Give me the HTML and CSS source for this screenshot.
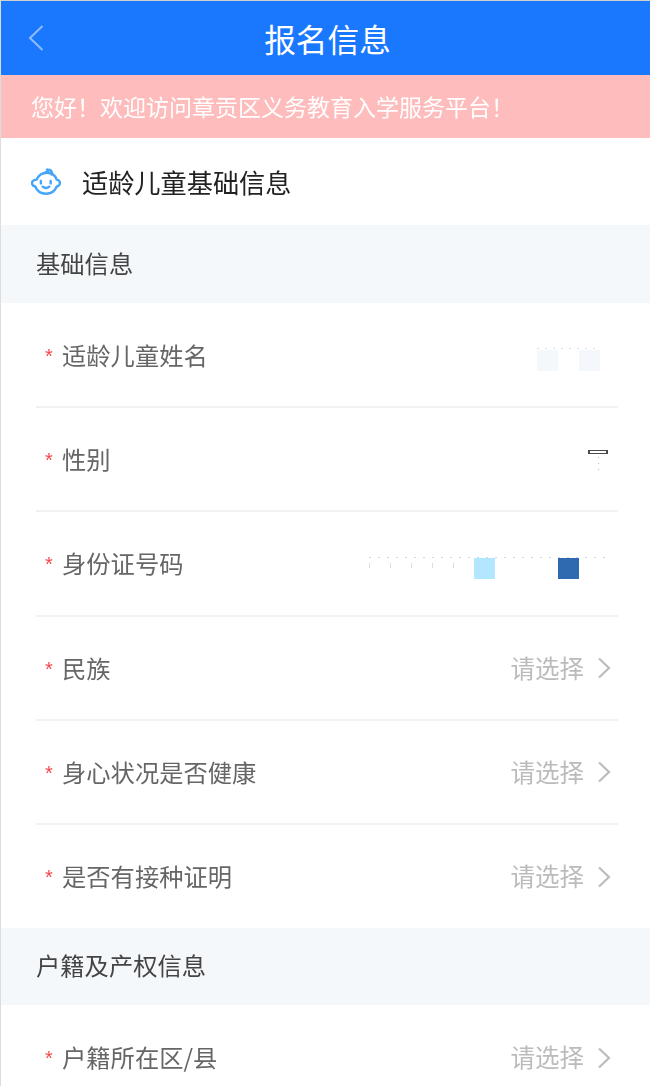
FILE: index.html
```html
<!DOCTYPE html>
<html lang="zh-CN">
<head>
<meta charset="utf-8">
<title>报名信息</title>
<link rel="stylesheet" href="styles.css">
</head>
<body>
<div class="page">
  <header class="nav">
    <svg class="back" viewBox="0 0 18 28" aria-hidden="true"><path d="M15.500 2 3 14l12.500 12" /></svg>
    <h1 class="nav-title">报名信息</h1>
  </header>
  <div class="notice">您好！欢迎访问章贡区义务教育入学服务平台！</div>
  <div class="heading">
    <svg class="baby" viewBox="0 0 32 30" aria-hidden="true">
      <path d="M6 12.500C8 7.500 12 5 17 5c5 0 9 3 10.500 7.500c2.500.5 3.500 2 3.500 3.500s-1.500 3.500-3.500 3.800C25.500 25 21 27.500 16 27.500S6.500 25 4.500 19.800C2.500 19.500 1 18 1 16s1.800-3.200 5-3.500Z"/>
      <path d="M15 5c2-.8 3.500-1.200 4-2.500c-.5-1-1.500-1-2-.5M20 2c2 1 3 3 2 5"/>
      <path d="M10.500 14v2.500M21 14v2.500M12.500 20c2 1.800 5 1.800 7 0"/>
    </svg>
    <span>适龄儿童基础信息</span>
  </div>

  <div class="section">基础信息</div>
  <div class="list list-first">
    <div class="row"><span class="label">适龄儿童姓名</span>
      <div class="value mask-name"><i class="sq sq-pale"></i><i class="sq sq-pale"></i></div></div>
    <div class="row"><span class="label">性别</span>
      <div class="value mask-sex"><i class="glyph"></i></div></div>
    <div class="row"><span class="label">身份证号码</span>
      <div class="value mask-id"><i class="sq sq-sky"></i><i class="sq sq-blue"></i></div></div>
    <div class="row"><span class="label">民族</span>
      <div class="value"><span class="placeholder">请选择</span><svg class="arrow" viewBox="0 0 14 22" aria-hidden="true"><path d="M2 1.500 12 11 2 20.500"/></svg></div></div>
    <div class="row"><span class="label">身心状况是否健康</span>
      <div class="value"><span class="placeholder">请选择</span><svg class="arrow" viewBox="0 0 14 22" aria-hidden="true"><path d="M2 1.500 12 11 2 20.500"/></svg></div></div>
    <div class="row"><span class="label">是否有接种证明</span>
      <div class="value"><span class="placeholder">请选择</span><svg class="arrow" viewBox="0 0 14 22" aria-hidden="true"><path d="M2 1.500 12 11 2 20.500"/></svg></div></div>
  </div>

  <div class="section section-short">户籍及产权信息</div>
  <div class="list">
    <div class="row"><span class="label">户籍所在区/县</span>
      <div class="value"><span class="placeholder">请选择</span><svg class="arrow" viewBox="0 0 14 22" aria-hidden="true"><path d="M2 1.500 12 11 2 20.500"/></svg></div></div>
  </div>
</div>
</body>
</html>
```
FILE: styles.css
```css
* { box-sizing: border-box; }
html, body { margin: 0; padding: 0; background: #fff; }
body {
  height: 1086px;
  overflow: hidden;
  font-family: "Noto Sans CJK SC", "Liberation Sans", sans-serif;
  font-weight: 400;
}
.page {
  height: 1086px;
  overflow: hidden;
  border-top: 1px solid #d0d0d0;
  border-left: 1px solid #dcdcdc;
  filter: blur(0.5px);
}
.nav {
  height: 74px;
  background: #1a78ff;
  display: flex;
  align-items: center;
  justify-content: center;
  position: relative;
  padding-left: 4px;
}
.nav-title {
  margin: 0;
  font-size: 31.700px;
  font-weight: 400;
  color: #fff;
  line-height: 72px;
}
.back {
  position: absolute;
  left: 26px;
  top: 23px;
  width: 18px;
  height: 28px;
  fill: none;
  stroke: #8fbcff;
  stroke-width: 2;
}
.notice {
  height: 63px;
  background: #ffbcbc;
  color: #fff;
  font-size: 23px;
  line-height: 63px;
  padding-left: 30px;
  white-space: nowrap;
}
.heading {
  height: 87px;
  display: flex;
  align-items: center;
  padding-left: 30px;
  gap: 21px;
  font-size: 26.200px;
  color: #222;
}
.baby {
  width: 30px;
  height: 28px;
  fill: none;
  stroke: #45a5f8;
  stroke-width: 2.600;
  stroke-linecap: round;
  stroke-linejoin: round;
}
.section {
  height: 78px;
  background: #f5f8fb;
  font-size: 24.300px;
  line-height: 75px;
  padding-left: 35px;
  color: #444;
}
.section-short { height: 77px; line-height: 73px; }
.list { padding: 0 32px 0 35px; }
.row {
  height: 104.200px;
  display: flex;
  align-items: center;
  justify-content: space-between;
  border-bottom: 2px solid #f2f2f2;
  padding-bottom: 1px;
}
.row:last-child { border-bottom: 0; }
.list-first { padding-top: 1px; }
.list-first .row:last-child { height: 103.200px; padding-bottom: 2px; }
.label {
  font-size: 24.300px;
  color: #666;
  position: relative;
  padding-left: 26px;
}
.label::before {
  content: "*";
  position: absolute;
  left: 9px;
  top: 1px;
  color: #f5484f;
  font-size: 20px;
  line-height: 36px;
  font-family: "Liberation Sans", sans-serif;
}
.value {
  display: flex;
  align-items: center;
  padding-right: 7px;
}
.placeholder {
  font-size: 24.500px;
  color: #bbb;
}
.arrow {
  width: 14px;
  height: 22px;
  margin-left: 13px;
  margin-top: 2px;
  fill: none;
  stroke: #bcbcbc;
  stroke-width: 2.200;
}
.sq { display: block; width: 21px; height: 21px; }
.sq-pale { background: #f4f7fb; }
.sq-sky { background: #b3e6ff; }
.sq-blue { background: #2f69b0; }
.mask-name {
  gap: 21px;
  padding-top: 2px;
  padding-right: 18px;
  margin-top: 9px;
  background: repeating-linear-gradient(90deg, #d9e0e8 0 2px, transparent 2px 8px) 0 0 / 63px 1px no-repeat;
  background-position: left top;
}
.mask-sex { padding-right: 10px; }
.glyph {
  display: block;
  width: 20px;
  height: 20px;
  margin-top: 2px;
  background:
    linear-gradient(#fff, #fff) 2px 1px / 16px 2px no-repeat,
    linear-gradient(#4a4a4a, #4a4a4a) 0 0 / 20px 4px no-repeat,
    repeating-linear-gradient(#bbb 0 1px, transparent 1px 6px) center 7px / 1px 13px no-repeat;
}
.mask-id {
  width: 240px;
  margin-top: 11px;
  padding-right: 0;
  padding-left: 105px;
  gap: 63px;
  height: 22px;
  background:
    repeating-linear-gradient(90deg, #ccd6e2 0 2px, transparent 2px 9px) 0 0 / 240px 1px no-repeat,
    repeating-linear-gradient(90deg, #e6ddd0 0 1px, transparent 1px 21px) 0 6px / 120px 5px no-repeat;
  align-items: flex-end;
  position: relative;
  left: -9px;
}
```
